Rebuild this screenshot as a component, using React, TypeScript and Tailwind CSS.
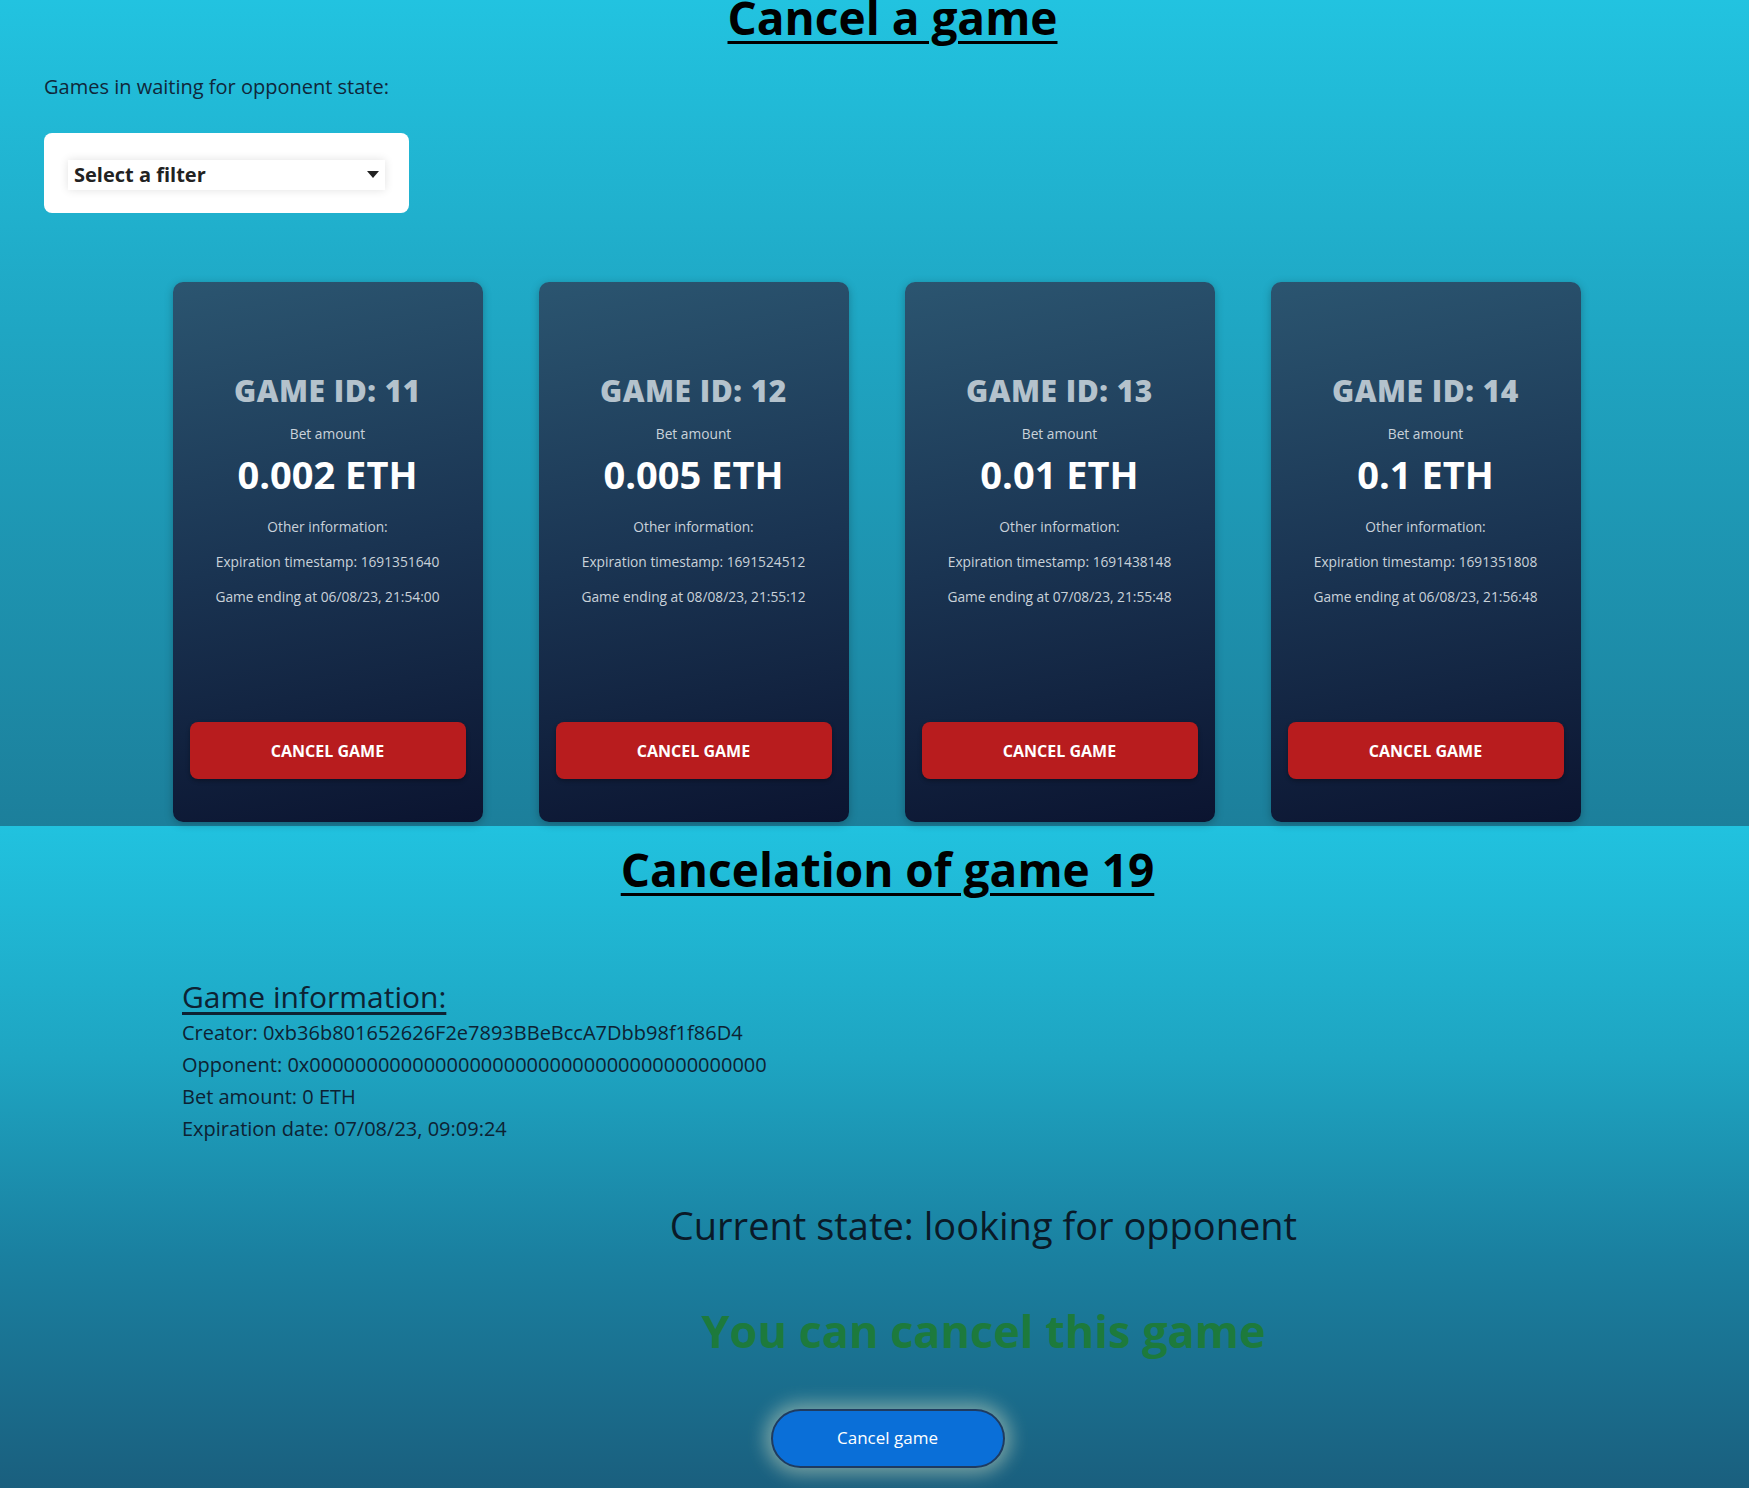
const games = [
  { id: 11, bet: "0.002 ETH", ts: "1691351640", end: "06/08/23, 21:54:00" },
  { id: 12, bet: "0.005 ETH", ts: "1691524512", end: "08/08/23, 21:55:12" },
  { id: 13, bet: "0.01 ETH", ts: "1691438148", end: "07/08/23, 21:55:48" },
  { id: 14, bet: "0.1 ETH", ts: "1691351808", end: "06/08/23, 21:56:48" },
];

function GameCard({ game }: { game: (typeof games)[number] }) {
  return (
    <div className="flex flex-col items-center w-[310px] h-[540px] rounded-[10px] bg-[linear-gradient(170deg,#2b5570_0%,#1a3452_50%,#0b1430_100%)] shadow-[0_2px_8px_rgba(0,0,0,0.25)] px-[17px] pt-[91px] pb-[43px] text-center">
      <h3 className="font-extrabold text-[30px] leading-[36px] tracking-[0.5px] text-[#b4c2cc]">
        GAME ID: {game.id}
      </h3>
      <span className="mt-[15px] text-[13.75px] text-[#c9d2da]">Bet amount</span>
      <span className="mt-[5px] font-bold text-[38px] leading-[48px] text-white">{game.bet}</span>
      <span className="mt-[19px] text-[13.75px] text-[#c9d2da]">Other information:</span>
      <span className="mt-[15px] text-[13.75px] text-[#c9d2da]">
        Expiration timestamp: {game.ts}
      </span>
      <span className="mt-[14px] text-[13.75px] text-[#c9d2da]">Game ending at {game.end}</span>
      <button className="mt-auto w-full h-[57px] rounded-[8px] bg-[#b81c1e] text-white font-bold text-[16px] shadow-[0_2px_4px_rgba(0,0,0,0.3)]">
        CANCEL GAME
      </button>
    </div>
  );
}

export default function App() {
  return (
    <div className="w-full min-h-[1488px] font-['Open_Sans','Noto_Sans',sans-serif] overflow-hidden">
      <section className="flow-root h-[826px] bg-[linear-gradient(180deg,#22c3e0_0%,#1fa6c3_40%,#1c7f9b_100%)] px-[44px]">
        <h1 className="-mt-[7px] pl-[36px] text-center font-bold text-[46px] leading-[48px] text-black underline underline-offset-[6px] decoration-[3px]">
          Cancel a game
        </h1>
        <p className="mt-[31px] text-[20px] text-[#10273a]">Games in waiting for opponent state:</p>
        <div className="mt-[31px] w-[365px] h-[80px] rounded-[8px] bg-white flex items-center px-[24px] pt-[4px]">
          <div className="flex items-center justify-between w-full h-[30px] px-[6px] shadow-[0_0_10px_rgba(0,0,0,0.12)] bg-white">
            <span className="font-bold text-[20px] text-[#222]">Select a filter</span>
            <svg width="12" height="8" viewBox="0 0 12 8">
              <path d="M0 0h12L6 7z" fill="#222" />
            </svg>
          </div>
        </div>
        <div className="mt-[69px] flex justify-center gap-[56px] pl-[4px]">
          {games.map((g) => (
            <GameCard key={g.id} game={g} />
          ))}
        </div>
      </section>
      <section className="h-[662px] bg-[linear-gradient(180deg,#21c2df_0%,#1ea5c2_35%,#1a80a0_65%,#1a5f7e_100%)] pt-[19px]">
        <h2 className="pl-[26px] text-center font-bold text-[46px] leading-[48px] text-black underline underline-offset-[6px] decoration-[3px]">
          Cancelation of game 19
        </h2>
        <div className="mt-[84px] ml-[182px] text-[#0d2233]">
          <h4 className="text-[30px] leading-[40px] underline underline-offset-[4px]">Game information:</h4>
          <div className="mt-[0px] text-[20px] leading-[32px]">
            <p>Creator: 0xb36b801652626F2e7893BBeBccA7Dbb98f1f86D4</p>
            <p>Opponent: 0x0000000000000000000000000000000000000000</p>
            <p>Bet amount: 0 ETH</p>
            <p>Expiration date: 07/08/23, 09:09:24</p>
          </div>
        </div>
        <p className="mt-[52px] pl-[218px] text-center text-[38px] text-[#0a1a28]">
          Current state: looking for opponent
        </p>
        <p className="mt-[43px] pl-[218px] text-center font-bold text-[45px] text-[#1d7a3c]">
          You can cancel this game
        </p>
        <div className="mt-[44px] flex justify-center pl-[26px]">
          <button className="w-[234px] h-[59px] rounded-full bg-[#0a6fd8] border-2 border-[#1f3b60] text-white text-[17px] shadow-[0_0_18px_6px_rgba(230,235,200,0.45)]">
            Cancel game
          </button>
        </div>
      </section>
    </div>
  );
}
